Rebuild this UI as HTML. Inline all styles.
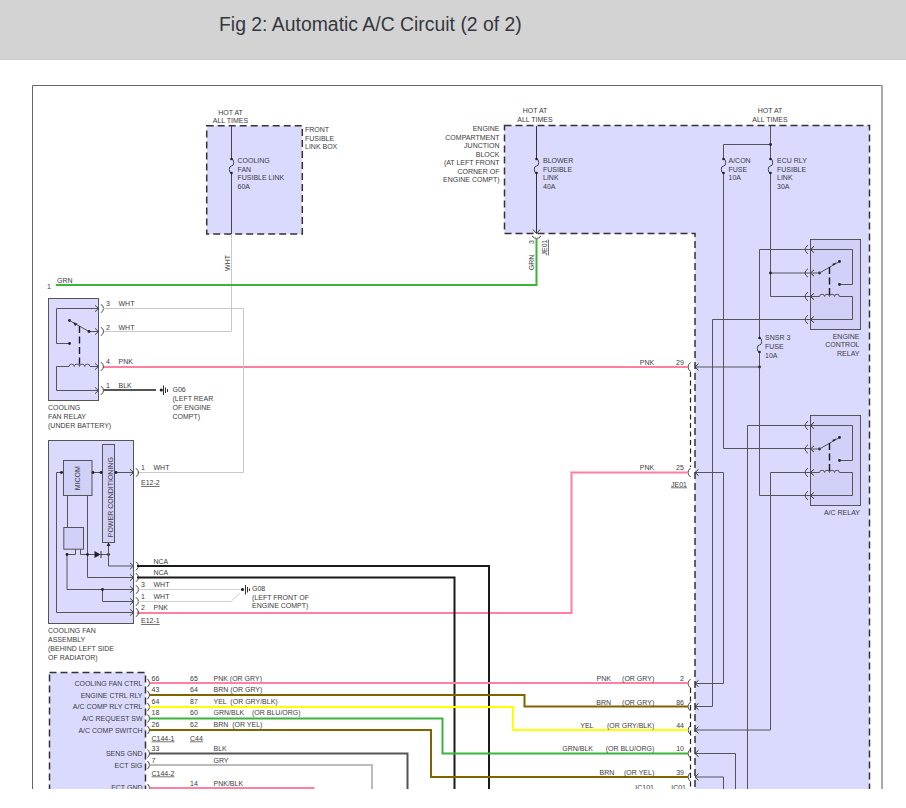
<!DOCTYPE html><html><head><meta charset="utf-8"><style>
html,body{margin:0;padding:0;background:#fff;width:906px;height:808px;overflow:hidden}
svg{display:block;font-family:"Liberation Sans",sans-serif}
.hdr{position:absolute;left:0;top:0;width:906px;height:59px;background:#d3d3d3;border-bottom:1px solid #cbcbcb}
.ttl{position:absolute;left:219px;top:12.5px;font-family:"Liberation Sans",sans-serif;font-size:19.4px;color:#353840;white-space:nowrap}
</style></head><body>
<div class="hdr"></div><div class="ttl">Fig 2: Automatic A/C Circuit (2 of 2)</div>
<svg style="position:absolute;left:0;top:0" width="906" height="808" viewBox="0 0 906 808">
<defs><clipPath id="cp"><rect x="0" y="60" width="906" height="729"/></clipPath></defs>
<g clip-path="url(#cp)">
<path d="M32.5,820 V85.5 H881" fill="none" stroke="#666" stroke-width="1"/>
<line x1="882" y1="85" x2="882" y2="820" stroke="#aaa" stroke-width="2"/>
<rect x="207" y="126" width="95" height="108" fill="#dadaff"/>
<rect x="206.7" y="125.7" width="95.6" height="108.3" fill="none" stroke="#333" stroke-width="1.5" stroke-dasharray="7,4"/>
<text x="230.5" y="115" font-size="7" fill="#3c3c3c" text-anchor="middle" >HOT AT</text>
<text x="230.5" y="123" font-size="7" fill="#3c3c3c" text-anchor="middle" >ALL TIMES</text>
<text x="305" y="132.0" font-size="7" fill="#3c3c3c" text-anchor="start" >FRONT</text>
<text x="305" y="140.5" font-size="7" fill="#3c3c3c" text-anchor="start" >FUSIBLE</text>
<text x="305" y="149.0" font-size="7" fill="#3c3c3c" text-anchor="start" >LINK BOX</text>
<polyline points="231.5,234 231.5,331.5 103,331.5" fill="none" stroke="#c8c8c8" stroke-width="1" />
<polyline points="231.5,126 231.5,234" fill="none" stroke="#444" stroke-width="1" />
<rect x="230.0" y="160" width="3" height="12" fill="#dadaff"/>
<path d="M231.5,159 A2.2,3.5 0 0 1 231.5,166.0 A2.2,3.5 0 0 0 231.5,173" fill="none" stroke="#444" stroke-width="1"/>
<circle cx="231.5" cy="159" r="1.3" fill="#222"/>
<circle cx="231.5" cy="173" r="1.3" fill="#222"/>
<text x="237.5" y="163.0" font-size="7" fill="#3c3c3c" text-anchor="start" >COOLING</text>
<text x="237.5" y="171.7" font-size="7" fill="#3c3c3c" text-anchor="start" >FAN</text>
<text x="237.5" y="180.4" font-size="7" fill="#3c3c3c" text-anchor="start" >FUSIBLE LINK</text>
<text x="237.5" y="189.1" font-size="7" fill="#3c3c3c" text-anchor="start" >60A</text>
<text x="0" y="0" font-size="7" fill="#3c3c3c" text-anchor="middle" transform="translate(230,263) rotate(-90)">WHT</text>
<path d="M504.5,125.5 H869.5 V830 H695 V233.5 H504.5 Z" fill="#dadaff" stroke="#333" stroke-width="1.5" stroke-dasharray="7,4"/>
<text x="535" y="113.0" font-size="7" fill="#3c3c3c" text-anchor="middle" >HOT AT</text>
<text x="535" y="121.7" font-size="7" fill="#3c3c3c" text-anchor="middle" >ALL TIMES</text>
<text x="499.5" y="131.0" font-size="7" fill="#3c3c3c" text-anchor="end" >ENGINE</text>
<text x="499.5" y="139.5" font-size="7" fill="#3c3c3c" text-anchor="end" >COMPARTMENT</text>
<text x="499.5" y="148.0" font-size="7" fill="#3c3c3c" text-anchor="end" >JUNCTION</text>
<text x="499.5" y="156.5" font-size="7" fill="#3c3c3c" text-anchor="end" >BLOCK</text>
<text x="499.5" y="165.0" font-size="7" fill="#3c3c3c" text-anchor="end" >(AT LEFT FRONT</text>
<text x="499.5" y="173.5" font-size="7" fill="#3c3c3c" text-anchor="end" >CORNER OF</text>
<text x="499.5" y="182.0" font-size="7" fill="#3c3c3c" text-anchor="end" >ENGINE COMPT)</text>
<polyline points="536.5,126 536.5,233.5" fill="none" stroke="#333" stroke-width="1" />
<rect x="535.0" y="160" width="3" height="12" fill="#dadaff"/>
<path d="M536.5,159 A2.2,3.5 0 0 1 536.5,166.0 A2.2,3.5 0 0 0 536.5,173" fill="none" stroke="#444" stroke-width="1"/>
<circle cx="536.5" cy="159" r="1.3" fill="#222"/>
<circle cx="536.5" cy="173" r="1.3" fill="#222"/>
<text x="543" y="163.0" font-size="7" fill="#3c3c3c" text-anchor="start" >BLOWER</text>
<text x="543" y="171.5" font-size="7" fill="#3c3c3c" text-anchor="start" >FUSIBLE</text>
<text x="543" y="180.0" font-size="7" fill="#3c3c3c" text-anchor="start" >LINK</text>
<text x="543" y="188.5" font-size="7" fill="#3c3c3c" text-anchor="start" >40A</text>
<path d="M533,229.5 L536.5,233.5 L540,229.5" fill="none" stroke="#444" stroke-width="1"/>
<path d="M532,236 Q536.5,241 541,236" fill="none" stroke="#444" stroke-width="1"/>
<polyline points="536.5,238.5 536.5,285 56,285" fill="none" stroke="#3cb33c" stroke-width="2" />
<text x="47" y="288.5" font-size="7" fill="#3c3c3c" text-anchor="start" >1</text>
<text x="57" y="283" font-size="7" fill="#3c3c3c" text-anchor="start" >GRN</text>
<text x="0" y="0" font-size="7" fill="#3c3c3c" text-anchor="start" transform="translate(534.3,244) rotate(-90)">3</text>
<text x="0" y="0" font-size="7" fill="#3c3c3c" text-anchor="middle" transform="translate(534.3,262.5) rotate(-90)">GRN</text>
<text x="0" y="0" font-size="7" fill="#3c3c3c" text-anchor="middle" transform="translate(547,247.5) rotate(-90)" text-decoration="underline">JE01</text>
<text x="770" y="113.0" font-size="7" fill="#3c3c3c" text-anchor="middle" >HOT AT</text>
<text x="770" y="121.7" font-size="7" fill="#3c3c3c" text-anchor="middle" >ALL TIMES</text>
<polyline points="770.5,126 770.5,296.5 812,296.5" fill="none" stroke="#555" stroke-width="1" />
<polyline points="770.5,273 812,273" fill="none" stroke="#555" stroke-width="1" />
<circle cx="770.5" cy="273" r="1.4" fill="#222"/>
<polyline points="770.5,144.5 723.5,144.5 723.5,448.5 812,448.5" fill="none" stroke="#555" stroke-width="1" />
<circle cx="770.5" cy="144.5" r="1.4" fill="#222"/>
<rect x="722.0" y="160" width="3" height="12" fill="#dadaff"/>
<path d="M723.5,159 A2.2,3.5 0 0 1 723.5,166.0 A2.2,3.5 0 0 0 723.5,173" fill="none" stroke="#444" stroke-width="1"/>
<circle cx="723.5" cy="159" r="1.3" fill="#222"/>
<circle cx="723.5" cy="173" r="1.3" fill="#222"/>
<rect x="769.0" y="160" width="3" height="12" fill="#dadaff"/>
<path d="M770.5,159 A2.2,3.5 0 0 1 770.5,166.0 A2.2,3.5 0 0 0 770.5,173" fill="none" stroke="#444" stroke-width="1"/>
<circle cx="770.5" cy="159" r="1.3" fill="#222"/>
<circle cx="770.5" cy="173" r="1.3" fill="#222"/>
<text x="728.5" y="163.0" font-size="7" fill="#3c3c3c" text-anchor="start" >A/CON</text>
<text x="728.5" y="171.7" font-size="7" fill="#3c3c3c" text-anchor="start" >FUSE</text>
<text x="728.5" y="180.4" font-size="7" fill="#3c3c3c" text-anchor="start" >10A</text>
<text x="777" y="163.0" font-size="7" fill="#3c3c3c" text-anchor="start" >ECU RLY</text>
<text x="777" y="171.7" font-size="7" fill="#3c3c3c" text-anchor="start" >FUSIBLE</text>
<text x="777" y="180.4" font-size="7" fill="#3c3c3c" text-anchor="start" >LINK</text>
<text x="777" y="189.1" font-size="7" fill="#3c3c3c" text-anchor="start" >30A</text>
<rect x="810.5" y="239.5" width="50" height="90" fill="#d0d0f8" stroke="#555" stroke-width="1"/>
<path d="M814.0,246.3 L810.5,249.5 L814.0,252.7" fill="none" stroke="#333" stroke-width="1"/>
<path d="M808.0,245.2 Q802.0,249.5 808.0,253.8" fill="none" stroke="#444" stroke-width="1"/>
<path d="M814.0,269.8 L810.5,273 L814.0,276.2" fill="none" stroke="#333" stroke-width="1"/>
<path d="M808.0,268.7 Q802.0,273 808.0,277.3" fill="none" stroke="#444" stroke-width="1"/>
<path d="M814.0,293.3 L810.5,296.5 L814.0,299.7" fill="none" stroke="#333" stroke-width="1"/>
<path d="M808.0,292.2 Q802.0,296.5 808.0,300.8" fill="none" stroke="#444" stroke-width="1"/>
<path d="M814.0,316.3 L810.5,319.5 L814.0,322.7" fill="none" stroke="#333" stroke-width="1"/>
<path d="M808.0,315.2 Q802.0,319.5 808.0,323.8" fill="none" stroke="#444" stroke-width="1"/>
<polyline points="810.5,249.5 852.5,249.5 852.5,284.5 839.5,284.5" fill="none" stroke="#555" stroke-width="1" />
<circle cx="839.5" cy="284.5" r="1.4" fill="#222"/>
<circle cx="819.5" cy="273" r="1.4" fill="#222"/>
<polyline points="810.5,273 819.5,273 839.5,261.5" fill="none" stroke="#555" stroke-width="1" />
<circle cx="839.5" cy="261.5" r="1.4" fill="#222"/>
<path d="M832,264 L836.5,262.5 L834,265.5 Z" fill="#222"/>
<line x1="829.5" y1="267" x2="829.5" y2="296.5" stroke="#1a1a1a" stroke-width="1.4" stroke-dasharray="7,3.5"/>
<polyline points="810.5,296.5 819.5,296.5" fill="none" stroke="#555" stroke-width="1" />
<path d="M819.5,296.5 a2.5,2.25 0 0 1 5,0 a2.5,2.25 0 0 1 5,0 a2.5,2.25 0 0 1 5,0 a2.5,2.25 0 0 1 5,0" fill="none" stroke="#555" stroke-width="1"/>
<polyline points="839.5,296.5 852.5,296.5 852.5,319.5 810.5,319.5" fill="none" stroke="#555" stroke-width="1" />
<text x="859.5" y="339.0" font-size="7" fill="#3c3c3c" text-anchor="end" >ENGINE</text>
<text x="859.5" y="347.4" font-size="7" fill="#3c3c3c" text-anchor="end" >CONTROL</text>
<text x="859.5" y="355.8" font-size="7" fill="#3c3c3c" text-anchor="end" >RELAY</text>
<rect x="810.5" y="415.5" width="50" height="90" fill="#d0d0f8" stroke="#555" stroke-width="1"/>
<path d="M814.0,422.3 L810.5,425.5 L814.0,428.7" fill="none" stroke="#333" stroke-width="1"/>
<path d="M808.0,421.2 Q802.0,425.5 808.0,429.8" fill="none" stroke="#444" stroke-width="1"/>
<path d="M814.0,445.8 L810.5,449 L814.0,452.2" fill="none" stroke="#333" stroke-width="1"/>
<path d="M808.0,444.7 Q802.0,449 808.0,453.3" fill="none" stroke="#444" stroke-width="1"/>
<path d="M814.0,469.3 L810.5,472.5 L814.0,475.7" fill="none" stroke="#333" stroke-width="1"/>
<path d="M808.0,468.2 Q802.0,472.5 808.0,476.8" fill="none" stroke="#444" stroke-width="1"/>
<path d="M814.0,492.3 L810.5,495.5 L814.0,498.7" fill="none" stroke="#333" stroke-width="1"/>
<path d="M808.0,491.2 Q802.0,495.5 808.0,499.8" fill="none" stroke="#444" stroke-width="1"/>
<polyline points="810.5,425.5 852.5,425.5 852.5,460.5 839.5,460.5" fill="none" stroke="#555" stroke-width="1" />
<circle cx="839.5" cy="460.5" r="1.4" fill="#222"/>
<circle cx="819.5" cy="449" r="1.4" fill="#222"/>
<polyline points="810.5,449 819.5,449 839.5,437.5" fill="none" stroke="#555" stroke-width="1" />
<circle cx="839.5" cy="437.5" r="1.4" fill="#222"/>
<path d="M832,440 L836.5,438.5 L834,441.5 Z" fill="#222"/>
<line x1="829.5" y1="443" x2="829.5" y2="472.5" stroke="#1a1a1a" stroke-width="1.4" stroke-dasharray="7,3.5"/>
<polyline points="810.5,472.5 819.5,472.5" fill="none" stroke="#555" stroke-width="1" />
<path d="M819.5,472.5 a2.5,2.25 0 0 1 5,0 a2.5,2.25 0 0 1 5,0 a2.5,2.25 0 0 1 5,0 a2.5,2.25 0 0 1 5,0" fill="none" stroke="#555" stroke-width="1"/>
<polyline points="839.5,472.5 852.5,472.5 852.5,495.5 810.5,495.5" fill="none" stroke="#555" stroke-width="1" />
<text x="860" y="515" font-size="7" fill="#3c3c3c" text-anchor="end" >A/C RELAY</text>
<polyline points="810.5,249.5 759.5,249.5 759.5,495.5 810.5,495.5" fill="none" stroke="#555" stroke-width="1" />
<rect x="758.0" y="339" width="3" height="12" fill="#dadaff"/>
<path d="M759.5,338 A2.2,3.5 0 0 1 759.5,345.0 A2.2,3.5 0 0 0 759.5,352" fill="none" stroke="#444" stroke-width="1"/>
<circle cx="759.5" cy="338" r="1.3" fill="#222"/>
<circle cx="759.5" cy="352" r="1.3" fill="#222"/>
<circle cx="759.5" cy="367" r="1.4" fill="#222"/>
<text x="765" y="339.5" font-size="7" fill="#3c3c3c" text-anchor="start" >SNSR 3</text>
<text x="765" y="348.5" font-size="7" fill="#3c3c3c" text-anchor="start" >FUSE</text>
<text x="765" y="357.5" font-size="7" fill="#3c3c3c" text-anchor="start" >10A</text>
<polyline points="759.5,367 695,367" fill="none" stroke="#555" stroke-width="1" />
<path d="M698.5,363.8 L695,367 L698.5,370.2" fill="none" stroke="#333" stroke-width="1"/>
<path d="M690.5,362.5 Q685.5,367 690.5,371.5" fill="none" stroke="#444" stroke-width="1"/>
<polyline points="810.5,319.5 712.5,319.5 712.5,706.5 695,706.5" fill="none" stroke="#555" stroke-width="1" />
<polyline points="810.5,425.5 747.5,425.5 747.5,830" fill="none" stroke="#555" stroke-width="1" />
<polyline points="810.5,472.5 770.5,472.5 770.5,730 695,730" fill="none" stroke="#555" stroke-width="1" />
<polyline points="695,472.5 723.5,472.5 723.5,683.5 695,683.5" fill="none" stroke="#555" stroke-width="1" />
<path d="M698.5,469.3 L695,472.5 L698.5,475.7" fill="none" stroke="#333" stroke-width="1"/>
<path d="M690.5,468.0 Q685.5,472.5 690.5,477.0" fill="none" stroke="#444" stroke-width="1"/>
<polyline points="695,753.5 735.5,753.5 735.5,830" fill="none" stroke="#555" stroke-width="1" />
<polyline points="695,777 723.5,777 723.5,830" fill="none" stroke="#555" stroke-width="1" />
<path d="M698.5,680.3 L695,683.5 L698.5,686.7" fill="none" stroke="#333" stroke-width="1"/>
<path d="M690.5,679.0 Q685.5,683.5 690.5,688.0" fill="none" stroke="#444" stroke-width="1"/>
<path d="M698.5,703.3 L695,706.5 L698.5,709.7" fill="none" stroke="#333" stroke-width="1"/>
<path d="M690.5,702.0 Q685.5,706.5 690.5,711.0" fill="none" stroke="#444" stroke-width="1"/>
<path d="M698.5,726.8 L695,730 L698.5,733.2" fill="none" stroke="#333" stroke-width="1"/>
<path d="M690.5,725.5 Q685.5,730 690.5,734.5" fill="none" stroke="#444" stroke-width="1"/>
<path d="M698.5,750.3 L695,753.5 L698.5,756.7" fill="none" stroke="#333" stroke-width="1"/>
<path d="M690.5,749.0 Q685.5,753.5 690.5,758.0" fill="none" stroke="#444" stroke-width="1"/>
<path d="M698.5,773.8 L695,777 L698.5,780.2" fill="none" stroke="#333" stroke-width="1"/>
<path d="M690.5,772.5 Q685.5,777 690.5,781.5" fill="none" stroke="#444" stroke-width="1"/>
<line x1="690.5" y1="372" x2="690.5" y2="467" stroke="#222" stroke-width="1.2" stroke-dasharray="5,3.5"/>
<line x1="690.5" y1="688" x2="690.5" y2="830" stroke="#222" stroke-width="1.2" stroke-dasharray="5,3.5"/>
<text x="647" y="365" font-size="7" fill="#3c3c3c" text-anchor="middle" >PNK</text>
<text x="680" y="365" font-size="7" fill="#3c3c3c" text-anchor="middle" >29</text>
<text x="647" y="470" font-size="7" fill="#3c3c3c" text-anchor="middle" >PNK</text>
<text x="680" y="470" font-size="7" fill="#3c3c3c" text-anchor="middle" >25</text>
<text x="679" y="486.5" font-size="7" fill="#3c3c3c" text-anchor="middle" text-decoration="underline">JE01</text>
<polyline points="103,367 688,367" fill="none" stroke="#ff7f9f" stroke-width="2" />
<polyline points="137,613 571.5,613 571.5,472.5 688,472.5" fill="none" stroke="#ff7f9f" stroke-width="2" />
<rect x="48.5" y="298.5" width="50" height="102" fill="#dadaff" stroke="#555" stroke-width="1"/>
<path d="M95.0,305.3 L98.5,308.5 L95.0,311.7" fill="none" stroke="#444" stroke-width="1"/>
<path d="M101.0,304.2 Q106.0,308.5 101.0,312.8" fill="none" stroke="#444" stroke-width="1"/>
<path d="M95.0,328.3 L98.5,331.5 L95.0,334.7" fill="none" stroke="#444" stroke-width="1"/>
<path d="M101.0,327.2 Q106.0,331.5 101.0,335.8" fill="none" stroke="#444" stroke-width="1"/>
<path d="M95.0,363.3 L98.5,366.5 L95.0,369.7" fill="none" stroke="#444" stroke-width="1"/>
<path d="M101.0,362.2 Q106.0,366.5 101.0,370.8" fill="none" stroke="#444" stroke-width="1"/>
<path d="M95.0,387.3 L98.5,390.5 L95.0,393.7" fill="none" stroke="#444" stroke-width="1"/>
<path d="M101.0,386.2 Q106.0,390.5 101.0,394.8" fill="none" stroke="#444" stroke-width="1"/>
<polyline points="98.5,308.5 56.5,308.5 56.5,343.5 69.5,343.5" fill="none" stroke="#555" stroke-width="1" />
<circle cx="69.5" cy="343.5" r="1.4" fill="#222"/>
<circle cx="69.5" cy="320.5" r="1.4" fill="#222"/>
<polyline points="69.5,320.5 89,331.5 98.5,331.5" fill="none" stroke="#555" stroke-width="1" />
<circle cx="89" cy="331.5" r="1.4" fill="#222"/>
<path d="M73,322 L77.5,323.8 L75,326 Z" fill="#222"/>
<line x1="79.5" y1="326" x2="79.5" y2="366" stroke="#1a1a1a" stroke-width="1.4" stroke-dasharray="7,3.5"/>
<polyline points="98.5,366.5 90,366.5" fill="none" stroke="#555" stroke-width="1" />
<path d="M69,366.5 a2.625,2.3625000000000003 0 0 1 5.25,0 a2.625,2.3625000000000003 0 0 1 5.25,0 a2.625,2.3625000000000003 0 0 1 5.25,0 a2.625,2.3625000000000003 0 0 1 5.25,0" fill="none" stroke="#555" stroke-width="1"/>
<polyline points="69,366.5 56.5,366.5 56.5,390.5 98.5,390.5" fill="none" stroke="#555" stroke-width="1" />
<text x="106" y="306" font-size="7" fill="#3c3c3c" text-anchor="start" >3</text>
<text x="118.5" y="306" font-size="7" fill="#3c3c3c" text-anchor="start" >WHT</text>
<text x="106" y="329.5" font-size="7" fill="#3c3c3c" text-anchor="start" >2</text>
<text x="118.5" y="329.5" font-size="7" fill="#3c3c3c" text-anchor="start" >WHT</text>
<text x="106" y="364" font-size="7" fill="#3c3c3c" text-anchor="start" >4</text>
<text x="118.5" y="364" font-size="7" fill="#3c3c3c" text-anchor="start" >PNK</text>
<text x="106" y="388" font-size="7" fill="#3c3c3c" text-anchor="start" >1</text>
<text x="118.5" y="388" font-size="7" fill="#3c3c3c" text-anchor="start" >BLK</text>
<polyline points="103,308.5 243.5,308.5 243.5,472.5 137,472.5" fill="none" stroke="#c8c8c8" stroke-width="1" />
<polyline points="103,390 156,390" fill="none" stroke="#555" stroke-width="2" />
<circle cx="161.3" cy="390" r="1.6" fill="#222"/>
<path d="M163.5,385.5 V395 M165.5,387.5 V393 M167.5,389 V392" stroke="#333" stroke-width="1"/>
<text x="172.5" y="392" font-size="7" fill="#3c3c3c" text-anchor="start" >G06</text>
<text x="172.5" y="401" font-size="7" fill="#3c3c3c" text-anchor="start" >(LEFT REAR</text>
<text x="172.5" y="410" font-size="7" fill="#3c3c3c" text-anchor="start" >OF ENGINE</text>
<text x="172.5" y="419" font-size="7" fill="#3c3c3c" text-anchor="start" >COMPT)</text>
<text x="48" y="410" font-size="7" fill="#3c3c3c" text-anchor="start" >COOLING</text>
<text x="48" y="419" font-size="7" fill="#3c3c3c" text-anchor="start" >FAN RELAY</text>
<text x="48" y="428" font-size="7" fill="#3c3c3c" text-anchor="start" >(UNDER BATTERY)</text>
<rect x="48.5" y="440.5" width="85" height="183" fill="#dadaff" stroke="#555" stroke-width="1"/>
<rect x="63.5" y="460.5" width="28.5" height="35" fill="#d0d0f8" stroke="#555" stroke-width="1"/>
<rect x="102.5" y="444.5" width="12" height="98" fill="#d0d0f8" stroke="#555" stroke-width="1"/>
<rect x="63.8" y="527.5" width="19.7" height="21.7" fill="#d0d0f8" stroke="#555" stroke-width="1"/>
<text x="0" y="0" font-size="7" fill="#3c3c3c" text-anchor="middle" transform="translate(80.3,478.3) rotate(-90)">MICOM</text>
<text x="0" y="0" font-size="7" fill="#3c3c3c" text-anchor="middle" transform="translate(112.5,497.2) rotate(-90)">POWER CONDITIONING</text>
<path d="M130.0,469.3 L133.5,472.5 L130.0,475.7" fill="none" stroke="#444" stroke-width="1"/>
<path d="M136.0,468.2 Q141.0,472.5 136.0,476.8" fill="none" stroke="#444" stroke-width="1"/>
<path d="M130.0,562.8 L133.5,566 L130.0,569.2" fill="none" stroke="#444" stroke-width="1"/>
<path d="M136.0,561.7 Q141.0,566 136.0,570.3" fill="none" stroke="#444" stroke-width="1"/>
<path d="M130.0,574.3 L133.5,577.5 L130.0,580.7" fill="none" stroke="#444" stroke-width="1"/>
<path d="M136.0,573.2 Q141.0,577.5 136.0,581.8" fill="none" stroke="#444" stroke-width="1"/>
<path d="M130.0,586.3 L133.5,589.5 L130.0,592.7" fill="none" stroke="#444" stroke-width="1"/>
<path d="M136.0,585.2 Q141.0,589.5 136.0,593.8" fill="none" stroke="#444" stroke-width="1"/>
<path d="M130.0,598.3 L133.5,601.5 L130.0,604.7" fill="none" stroke="#444" stroke-width="1"/>
<path d="M136.0,597.2 Q141.0,601.5 136.0,605.8" fill="none" stroke="#444" stroke-width="1"/>
<path d="M130.0,609.3 L133.5,612.5 L130.0,615.7" fill="none" stroke="#444" stroke-width="1"/>
<path d="M136.0,608.2 Q141.0,612.5 136.0,616.8" fill="none" stroke="#444" stroke-width="1"/>
<polyline points="63.5,472.5 56.5,472.5 56.5,612.5 133.5,612.5" fill="none" stroke="#555" stroke-width="1" />
<circle cx="61.5" cy="472.5" r="1.4" fill="#222"/>
<polyline points="92,472.5 102.5,472.5" fill="none" stroke="#555" stroke-width="1" />
<circle cx="93" cy="472.5" r="1.4" fill="#222"/>
<circle cx="101" cy="472.5" r="1.4" fill="#222"/>
<polyline points="114.5,472.5 133.5,472.5" fill="none" stroke="#555" stroke-width="1" />
<circle cx="116" cy="472.5" r="1.4" fill="#222"/>
<polyline points="67.5,495.5 67.5,527.5" fill="none" stroke="#555" stroke-width="1" />
<polyline points="87.5,495.5 87.5,577.5 133.5,577.5" fill="none" stroke="#555" stroke-width="1" />
<polyline points="75.5,549 75.5,554.5 67,554.5 67,589.5 133.5,589.5" fill="none" stroke="#555" stroke-width="1" />
<polyline points="80.5,549 80.5,554.5 95,554.5" fill="none" stroke="#555" stroke-width="1" />
<polyline points="100.5,554.5 108.5,554.5" fill="none" stroke="#555" stroke-width="1" />
<circle cx="67" cy="554.5" r="1.4" fill="#222"/>
<circle cx="87.5" cy="554.5" r="1.4" fill="#222"/>
<circle cx="108.5" cy="554.5" r="1.4" fill="#222"/>
<path d="M94.5,551 L94.5,558 L100.5,554.5 Z" fill="#222"/><line x1="101" y1="551" x2="101" y2="558" stroke="#333"/>
<polyline points="108.5,543 108.5,566 133.5,566" fill="none" stroke="#555" stroke-width="1" />
<path d="M106.5,546 L108.5,542.5 L110.5,546 Z" fill="#222"/>
<polyline points="102.5,589.5 102.5,601.5 133.5,601.5" fill="none" stroke="#555" stroke-width="1" />
<circle cx="102.5" cy="589.5" r="1.4" fill="#222"/>
<text x="141" y="470" font-size="7" fill="#3c3c3c" text-anchor="start" >1</text>
<text x="153.5" y="470" font-size="7" fill="#3c3c3c" text-anchor="start" >WHT</text>
<text x="141" y="485" font-size="7" fill="#3c3c3c" text-anchor="start" text-decoration="underline">E12-2</text>
<text x="153.5" y="564" font-size="7" fill="#3c3c3c" text-anchor="start" >NCA</text>
<text x="153.5" y="574.8" font-size="7" fill="#3c3c3c" text-anchor="start" >NCA</text>
<text x="141" y="587" font-size="7" fill="#3c3c3c" text-anchor="start" >3</text>
<text x="153.5" y="587" font-size="7" fill="#3c3c3c" text-anchor="start" >WHT</text>
<text x="141" y="599" font-size="7" fill="#3c3c3c" text-anchor="start" >1</text>
<text x="153.5" y="599" font-size="7" fill="#3c3c3c" text-anchor="start" >WHT</text>
<text x="141" y="609.8" font-size="7" fill="#3c3c3c" text-anchor="start" >2</text>
<text x="153.5" y="609.8" font-size="7" fill="#3c3c3c" text-anchor="start" >PNK</text>
<text x="141" y="623.3" font-size="7" fill="#3c3c3c" text-anchor="start" text-decoration="underline">E12-1</text>
<text x="48" y="632.5" font-size="7" fill="#3c3c3c" text-anchor="start" >COOLING FAN</text>
<text x="48" y="641.5" font-size="7" fill="#3c3c3c" text-anchor="start" >ASSEMBLY</text>
<text x="48" y="650.5" font-size="7" fill="#3c3c3c" text-anchor="start" >(BEHIND LEFT SIDE</text>
<text x="48" y="659.5" font-size="7" fill="#3c3c3c" text-anchor="start" >OF RADIATOR)</text>
<polyline points="137,566 489,566 489,830" fill="none" stroke="#1a1a1a" stroke-width="2" />
<polyline points="137,577.5 454.5,577.5 454.5,830" fill="none" stroke="#1a1a1a" stroke-width="2" />
<polyline points="137,589.5 240,589.5" fill="none" stroke="#cfcfcf" stroke-width="1" />
<polyline points="137,601.5 231,601.5 240,593" fill="none" stroke="#cfcfcf" stroke-width="1" />
<circle cx="242.5" cy="589.5" r="1.6" fill="#222"/>
<path d="M245.5,585 V594.5 M247.5,587 V592.5 M249.5,588.5 V591" stroke="#333" stroke-width="1"/>
<text x="252" y="591.0" font-size="7" fill="#3c3c3c" text-anchor="start" >G08</text>
<text x="252" y="599.5" font-size="7" fill="#3c3c3c" text-anchor="start" >(LEFT FRONT OF</text>
<text x="252" y="608.0" font-size="7" fill="#3c3c3c" text-anchor="start" >ENGINE COMPT)</text>
<rect x="49.5" y="672.5" width="96" height="200" fill="#dadaff" stroke="#333" stroke-width="1.5" stroke-dasharray="7,4"/>
<text x="142.5" y="686.0" font-size="7" fill="#3c3c3c" text-anchor="end" >COOLING FAN CTRL</text>
<text x="142.5" y="697.5" font-size="7" fill="#3c3c3c" text-anchor="end" >ENGINE CTRL RLY</text>
<text x="142.5" y="709.0" font-size="7" fill="#3c3c3c" text-anchor="end" >A/C COMP RLY CTRL</text>
<text x="142.5" y="721.0" font-size="7" fill="#3c3c3c" text-anchor="end" >A/C REQUEST SW</text>
<text x="142.5" y="732.75" font-size="7" fill="#3c3c3c" text-anchor="end" >A/C COMP SWITCH</text>
<text x="142.5" y="756.0" font-size="7" fill="#3c3c3c" text-anchor="end" >SENS GND</text>
<text x="142.5" y="767.75" font-size="7" fill="#3c3c3c" text-anchor="end" >ECT SIG</text>
<text x="142.5" y="789.5" font-size="7" fill="#3c3c3c" text-anchor="end" >ECT GND</text>
<path d="M147.5,679 Q151.5,683 147.5,687" fill="none" stroke="#444" stroke-width="1"/>
<path d="M147.5,691 Q151.5,695 147.5,699" fill="none" stroke="#444" stroke-width="1"/>
<path d="M147.5,703 Q151.5,707 147.5,711" fill="none" stroke="#444" stroke-width="1"/>
<path d="M147.5,714.5 Q151.5,718.5 147.5,722.5" fill="none" stroke="#444" stroke-width="1"/>
<path d="M147.5,726 Q151.5,730 147.5,734" fill="none" stroke="#444" stroke-width="1"/>
<path d="M147.5,749.5 Q151.5,753.5 147.5,757.5" fill="none" stroke="#444" stroke-width="1"/>
<path d="M147.5,761 Q151.5,765 147.5,769" fill="none" stroke="#444" stroke-width="1"/>
<path d="M147.5,784 Q151.5,788 147.5,792" fill="none" stroke="#444" stroke-width="1"/>
<text x="151.5" y="681" font-size="7" fill="#3c3c3c" text-anchor="start" >66</text>
<text x="190" y="681" font-size="7" fill="#3c3c3c" text-anchor="start" >65</text>
<text x="213.5" y="681" font-size="7" fill="#3c3c3c" text-anchor="start" xml:space="preserve">PNK (OR GRY)</text>
<text x="151.5" y="692.2" font-size="7" fill="#3c3c3c" text-anchor="start" >43</text>
<text x="190" y="692.2" font-size="7" fill="#3c3c3c" text-anchor="start" >64</text>
<text x="213.5" y="692.2" font-size="7" fill="#3c3c3c" text-anchor="start" xml:space="preserve">BRN (OR GRY)</text>
<text x="151.5" y="703.5" font-size="7" fill="#3c3c3c" text-anchor="start" >64</text>
<text x="190" y="703.5" font-size="7" fill="#3c3c3c" text-anchor="start" >87</text>
<text x="213.5" y="703.5" font-size="7" fill="#3c3c3c" text-anchor="start" xml:space="preserve">YEL  (OR GRY/BLK)</text>
<text x="151.5" y="715.3" font-size="7" fill="#3c3c3c" text-anchor="start" >18</text>
<text x="190" y="715.3" font-size="7" fill="#3c3c3c" text-anchor="start" >60</text>
<text x="213.5" y="715.3" font-size="7" fill="#3c3c3c" text-anchor="start" xml:space="preserve">GRN/BLK    (OR BLU/ORG)</text>
<text x="151.5" y="727.4" font-size="7" fill="#3c3c3c" text-anchor="start" >26</text>
<text x="190" y="727.4" font-size="7" fill="#3c3c3c" text-anchor="start" >62</text>
<text x="213.5" y="727.4" font-size="7" fill="#3c3c3c" text-anchor="start" xml:space="preserve">BRN  (OR YEL)</text>
<text x="151.5" y="740.5" font-size="7" fill="#3c3c3c" text-anchor="start" text-decoration="underline">C144-1</text>
<text x="190" y="740.5" font-size="7" fill="#3c3c3c" text-anchor="start" text-decoration="underline">C44</text>
<text x="151.5" y="751" font-size="7" fill="#3c3c3c" text-anchor="start" >33</text>
<text x="213.5" y="751" font-size="7" fill="#3c3c3c" text-anchor="start" >BLK</text>
<text x="151.5" y="763" font-size="7" fill="#3c3c3c" text-anchor="start" >7</text>
<text x="213.5" y="763" font-size="7" fill="#3c3c3c" text-anchor="start" >GRY</text>
<text x="151.5" y="775.5" font-size="7" fill="#3c3c3c" text-anchor="start" text-decoration="underline">C144-2</text>
<text x="190" y="786" font-size="7" fill="#3c3c3c" text-anchor="start" >14</text>
<text x="213.5" y="786" font-size="7" fill="#3c3c3c" text-anchor="start" >PNK/BLK</text>
<polyline points="149.5,683 688,683" fill="none" stroke="#ff7f9f" stroke-width="2" />
<polyline points="149.5,695 524.5,695 524.5,706.5 688,706.5" fill="none" stroke="#7f6400" stroke-width="2" />
<polyline points="149.5,707 513,707 513,730 688,730" fill="none" stroke="#ffff00" stroke-width="2" />
<polyline points="149.5,718.5 442.5,718.5 442.5,753.5 688,753.5" fill="none" stroke="#3cb33c" stroke-width="2" />
<polyline points="149.5,730 431,730 431,777 688,777" fill="none" stroke="#7f6400" stroke-width="2" />
<polyline points="149.5,753.5 407.5,753.5 407.5,830" fill="none" stroke="#555" stroke-width="2" />
<polyline points="149.5,765 372,765 372,830" fill="none" stroke="#bbb" stroke-width="2" />
<polyline points="149.5,788 314.5,788" fill="none" stroke="#ff7f9f" stroke-width="2" />
<text x="611" y="681.0" font-size="7" fill="#3c3c3c" text-anchor="end" >PNK</text>
<text x="654.25" y="681.0" font-size="7" fill="#3c3c3c" text-anchor="end" >(OR GRY)</text>
<text x="684" y="681.0" font-size="7" fill="#3c3c3c" text-anchor="end" >2</text>
<text x="611" y="704.5" font-size="7" fill="#3c3c3c" text-anchor="end" >BRN</text>
<text x="654.25" y="704.5" font-size="7" fill="#3c3c3c" text-anchor="end" >(OR GRY)</text>
<text x="684" y="704.5" font-size="7" fill="#3c3c3c" text-anchor="end" >86</text>
<text x="593.5" y="727.5" font-size="7" fill="#3c3c3c" text-anchor="end" >YEL</text>
<text x="654.25" y="727.5" font-size="7" fill="#3c3c3c" text-anchor="end" >(OR GRY/BLK)</text>
<text x="684" y="727.5" font-size="7" fill="#3c3c3c" text-anchor="end" >44</text>
<text x="593" y="751.0" font-size="7" fill="#3c3c3c" text-anchor="end" >GRN/BLK</text>
<text x="654.25" y="751.0" font-size="7" fill="#3c3c3c" text-anchor="end" >(OR BLU/ORG)</text>
<text x="684" y="751.0" font-size="7" fill="#3c3c3c" text-anchor="end" >10</text>
<text x="614.25" y="774.5" font-size="7" fill="#3c3c3c" text-anchor="end" >BRN</text>
<text x="654.25" y="774.5" font-size="7" fill="#3c3c3c" text-anchor="end" >(OR YEL)</text>
<text x="684" y="774.5" font-size="7" fill="#3c3c3c" text-anchor="end" >39</text>
<text x="654" y="790" font-size="7" fill="#3c3c3c" text-anchor="end" >IC101</text>
<text x="686" y="790" font-size="7" fill="#3c3c3c" text-anchor="end" >IC01</text>
</g></svg></body></html>
